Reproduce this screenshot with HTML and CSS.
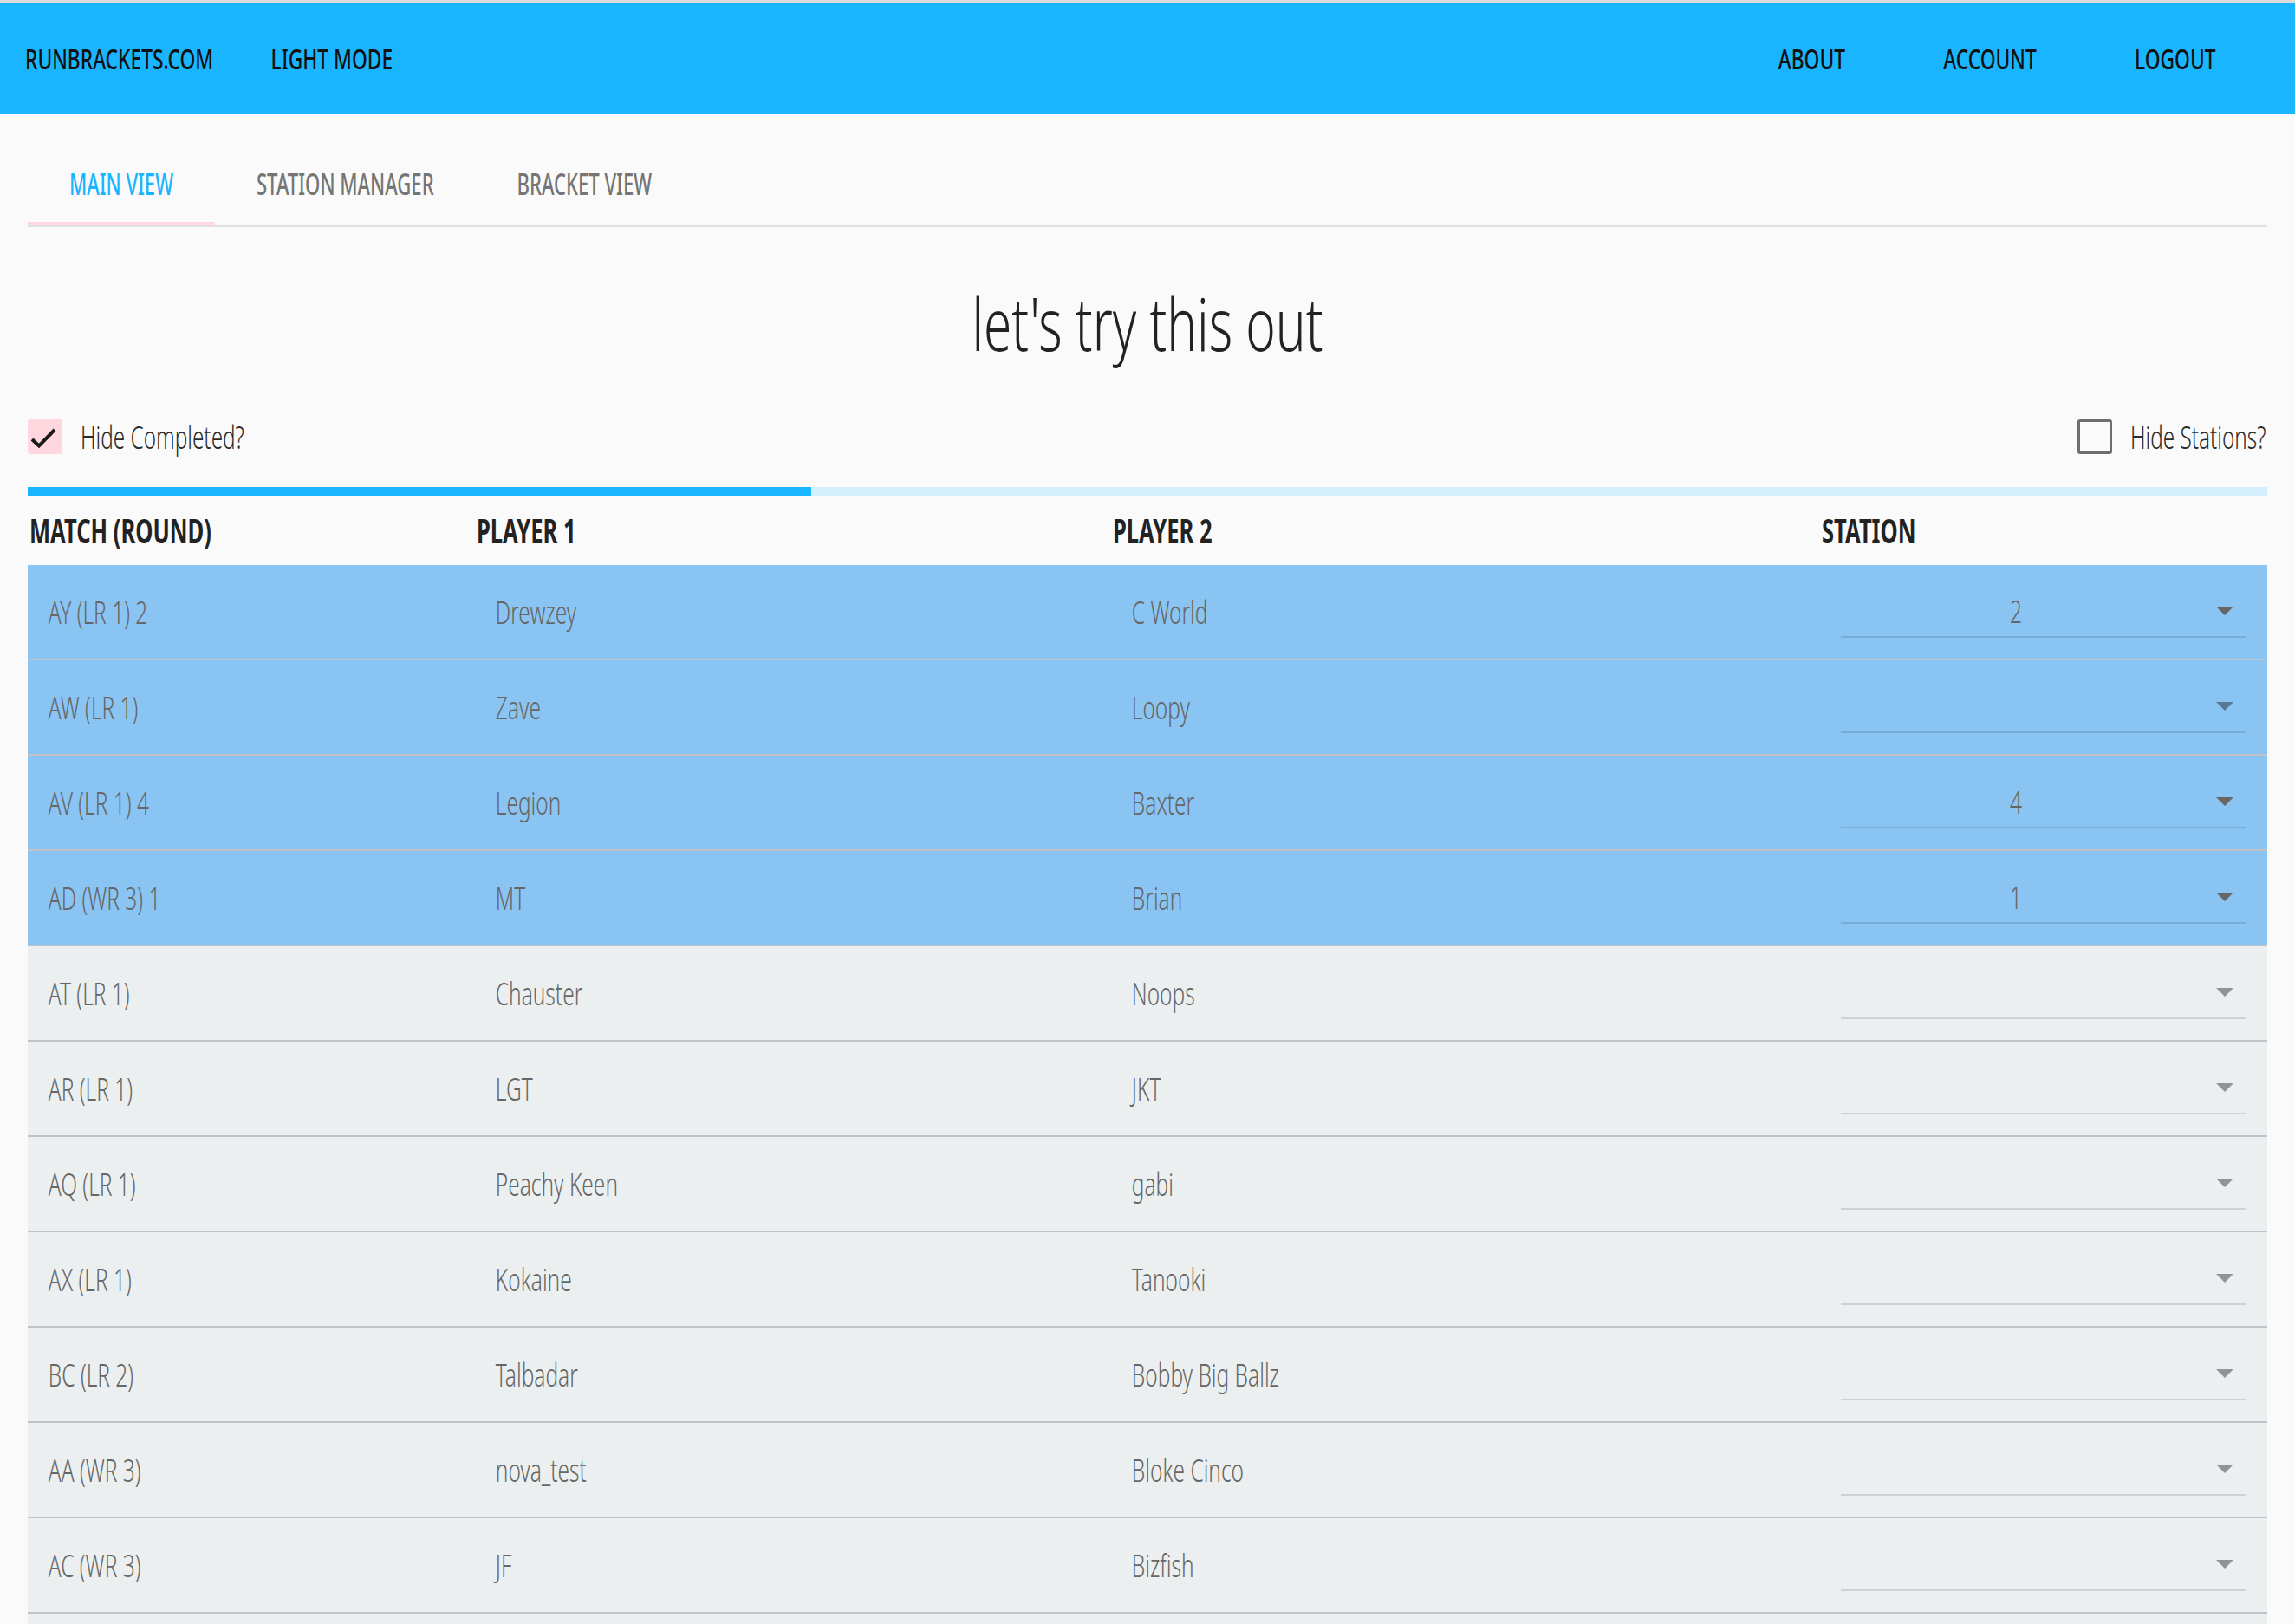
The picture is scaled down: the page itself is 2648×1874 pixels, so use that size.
FILE: index.html
```html
<!DOCTYPE html>
<html lang="en">
<head>
<meta charset="utf-8">
<title>runbrackets.com</title>
<link rel="stylesheet" href="styles.css">
</head>
<body>
<header class="topbar">
  <nav class="nav-left">
    <a class="nav-link" href="#">RUNBRACKETS.COM</a>
    <a class="nav-link" href="#">LIGHT MODE</a>
  </nav>
  <nav class="nav-right">
    <a class="nav-link" href="#">ABOUT</a>
    <a class="nav-link" href="#">ACCOUNT</a>
    <a class="nav-link" href="#">LOGOUT</a>
  </nav>
</header>

<div class="tabs">
  <div class="tablist">
    <a class="tab active" href="#">MAIN VIEW</a>
    <a class="tab" href="#">STATION MANAGER</a>
    <a class="tab" href="#">BRACKET VIEW</a>
  </div>
</div>

<h1 class="title">let's try this out</h1>

<div class="options">
  <label class="option">
    <span class="box checked"><svg width="40" height="40" viewBox="0 0 40 40"><polyline points="5,23 13,30.5 31,12" fill="none" stroke="#1a1a1a" stroke-width="4"/></svg></span>
    <span class="label-text">Hide Completed?</span>
  </label>
  <label class="option">
    <span class="box empty"></span>
    <span class="label-text fixed">Hide Stations?</span>
  </label>
</div>

<div class="progress"><div class="progress-fill" style="width:34.98%"></div></div>

<div class="matches">
  <div class="thead">
    <div class="th">MATCH (ROUND)</div>
    <div class="th">PLAYER 1</div>
    <div class="th">PLAYER 2</div>
    <div class="th">STATION</div>
  </div>

  <div class="row active">
    <div class="cell">AY (LR 1) 2</div><div class="cell">Drewzey</div><div class="cell">C World</div>
    <div class="station"><div class="select"><span class="value">2</span><span class="arrow set"></span></div></div>
  </div>
  <div class="row active">
    <div class="cell">AW (LR 1)</div><div class="cell">Zave</div><div class="cell">Loopy</div>
    <div class="station"><div class="select"><span class="value"></span><span class="arrow"></span></div></div>
  </div>
  <div class="row active">
    <div class="cell">AV (LR 1) 4</div><div class="cell">Legion</div><div class="cell">Baxter</div>
    <div class="station"><div class="select"><span class="value">4</span><span class="arrow set"></span></div></div>
  </div>
  <div class="row active">
    <div class="cell">AD (WR 3) 1</div><div class="cell">MT</div><div class="cell">Brian</div>
    <div class="station"><div class="select"><span class="value">1</span><span class="arrow set"></span></div></div>
  </div>
  <div class="row">
    <div class="cell">AT (LR 1)</div><div class="cell">Chauster</div><div class="cell">Noops</div>
    <div class="station"><div class="select"><span class="value"></span><span class="arrow"></span></div></div>
  </div>
  <div class="row">
    <div class="cell">AR (LR 1)</div><div class="cell">LGT</div><div class="cell">JKT</div>
    <div class="station"><div class="select"><span class="value"></span><span class="arrow"></span></div></div>
  </div>
  <div class="row">
    <div class="cell">AQ (LR 1)</div><div class="cell">Peachy Keen</div><div class="cell">gabi</div>
    <div class="station"><div class="select"><span class="value"></span><span class="arrow"></span></div></div>
  </div>
  <div class="row">
    <div class="cell">AX (LR 1)</div><div class="cell">Kokaine</div><div class="cell">Tanooki</div>
    <div class="station"><div class="select"><span class="value"></span><span class="arrow"></span></div></div>
  </div>
  <div class="row">
    <div class="cell">BC (LR 2)</div><div class="cell">Talbadar</div><div class="cell">Bobby Big Ballz</div>
    <div class="station"><div class="select"><span class="value"></span><span class="arrow"></span></div></div>
  </div>
  <div class="row">
    <div class="cell">AA (WR 3)</div><div class="cell">nova_test</div><div class="cell">Bloke Cinco</div>
    <div class="station"><div class="select"><span class="value"></span><span class="arrow"></span></div></div>
  </div>
  <div class="row">
    <div class="cell">AC (WR 3)</div><div class="cell">JF</div><div class="cell">Bizfish</div>
    <div class="station"><div class="select"><span class="value"></span><span class="arrow"></span></div></div>
  </div>
  <div class="row">
    <div class="cell"></div><div class="cell"></div><div class="cell"></div>
    <div class="station"><div class="select"><span class="value"></span><span class="arrow"></span></div></div>
  </div>
</div>
</body>
</html>
```
FILE: styles.css
```css
/* The reference uses a tall condensed face (Oswald-like); with no such font
   installed, Noto Sans is narrowed horizontally with scaleX. */
html {
  overflow: hidden;
}

body {
  margin: 0;
  background: #fafafa;
  font-family: "Noto Sans", "DejaVu Sans", sans-serif;
  color: #222;
}

/* ---------- top bar ---------- */
.topbar {
  border-top: 3px solid #dcdcdc;
  height: 129px;
  padding: 0 91px 0 29px;
  background: #1ab5ff;
  display: flex;
  align-items: center;
  justify-content: space-between;
}

.nav-left,
.nav-right {
  display: flex;
  transform: scaleX(0.69);
}

.nav-left {
  gap: 96px;
  transform-origin: left center;
}

.nav-right {
  gap: 164px;
  transform-origin: right center;
}

.nav-link {
  font-size: 33px;
  font-weight: 500;
  color: #111;
  text-decoration: none;
  white-space: nowrap;
}

/* ---------- tabs ---------- */
.tabs {
  margin: 32px 32px 0;
  border-bottom: 2px solid #e0e0e0;
}

.tablist {
  height: 96px;
  display: flex;
  transform: scaleX(0.65);
  transform-origin: left center;
}

.tab {
  padding: 0 73.8px;
  display: flex;
  align-items: center;
  font-size: 34px;
  font-weight: 500;
  color: #757575;
  text-decoration: none;
  white-space: nowrap;
}

.tab.active {
  color: #1ab5ff;
  box-shadow: inset 0 -4px 0 #ffd7df;
}

/* ---------- title ---------- */
.title {
  margin: 71px 0 0;
  text-align: center;
  font-size: 84px;
  line-height: 80px;
  font-weight: 300;
  color: #222;
  transform: scaleX(0.696);
}

/* ---------- options ---------- */
.options {
  margin: 71px 32px 0;
  height: 40px;
  display: flex;
  justify-content: space-between;
  align-items: center;
}

.option {
  display: flex;
  align-items: center;
  gap: 21px;
}

.label-text {
  display: inline-block;
  font-size: 36px;
  font-weight: 300;
  color: #2a2a2a;
  white-space: nowrap;
  transform: scaleX(0.675);
  transform-origin: left center;
}

.label-text.fixed {
  width: 158px;
}

.box {
  width: 40px;
  height: 40px;
  box-sizing: border-box;
  border-radius: 3px;
  display: block;
  flex: none;
}

.box svg {
  display: block;
}

.box.checked {
  background: #ffd7df;
}

.box.empty {
  border: 3px solid #6e6e6e;
}

/* ---------- progress ---------- */
.progress {
  margin: 38px 32px 0;
  height: 10px;
  background: #d4f0ff;
}

.progress-fill {
  height: 100%;
  background: #1ab5ff;
}

/* ---------- table ---------- */
.matches {
  margin: 0 32px;
}

.thead,
.row {
  display: grid;
  grid-template-columns: 516px 734px 818px 516px;
  align-items: center;
}

.thead {
  height: 80px;
}

.th {
  padding: 0 0 2px 3px;
  font-size: 39px;
  font-weight: 700;
  color: #222;
  white-space: nowrap;
  transform: scaleX(0.655);
  transform-origin: left center;
}

.row {
  height: 110px;
  box-sizing: border-box;
  border-bottom: 2px solid #bfc3c7;
  background: #ebeff0;
}

.row.active {
  background: #8ac4f3;
}

.cell {
  padding-left: 35px;
  font-size: 36px;
  font-weight: 300;
  color: #666;
  white-space: nowrap;
  transform: scaleX(0.68);
  transform-origin: left center;
}

.station {
  align-self: start;
  padding: 24px 24px 0;
}

.select {
  height: 60px;
  box-sizing: border-box;
  border-bottom: 2px solid rgba(0, 0, 0, 0.12);
  display: flex;
  align-items: center;
}

.value {
  flex: 1;
  text-align: center;
  font-size: 36px;
  font-weight: 300;
  color: #666;
  transform: scaleX(0.68);
}

.arrow {
  width: 0;
  height: 0;
  margin: 0 15px 0 29px;
  border-left: 10px solid transparent;
  border-right: 10px solid transparent;
  border-top: 10px solid rgba(0, 0, 0, 0.38);
}

.arrow.set {
  border-top-color: #666;
}
```
